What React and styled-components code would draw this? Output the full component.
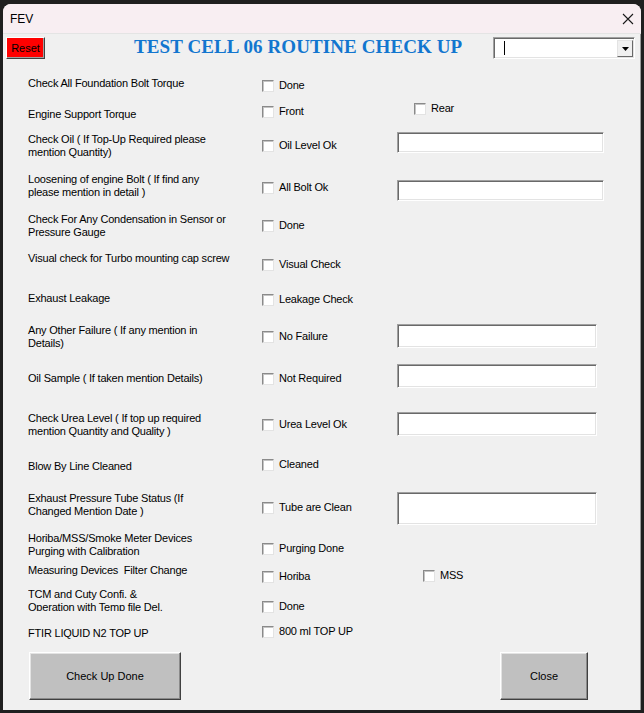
import React from "react";
import styled, { createGlobalStyle } from "styled-components";

const GlobalStyle = createGlobalStyle`
  html, body {
    margin: 0;
    padding: 0;
    background: #1f1f1f;
  }
  #root {
    width: 644px;
    height: 713px;
    overflow: hidden;
  }
`;

const Window = styled.div`
  width: 638px;
  height: 706px;
  margin: 4px 0 0 3px;
  border-radius: 8px 8px 0 0;
  overflow: hidden;
  background: #f0f0f0;
  display: flex;
  flex-direction: column;
  font-family: "Liberation Sans", Arial, sans-serif;
  font-size: 11px;
  letter-spacing: -0.2px;
  color: #000;
`;

const TitleBar = styled.div`
  height: 29px;
  flex: none;
  display: flex;
  align-items: center;
  justify-content: space-between;
  padding: 0 7px 0 7px;
  background: #f8eef2;
  border-bottom: 1px solid #e4e4e4;
  font-size: 12px;
  letter-spacing: 0;
`;

const Body = styled.div`
  flex: 1;
  display: flex;
  flex-direction: column;
  border-right: 1px solid #9a9a9a;
`;

const Header = styled.div`
  height: 33px;
  flex: none;
  display: flex;
  align-items: flex-start;
  padding: 3px 5px 0 3px;
`;

const ResetButton = styled.button`
  width: 39px;
  height: 22px;
  padding: 0;
  background: #ff0000;
  font: inherit;
  color: #000;
  border: 1px solid;
  border-color: #ffffff #404040 #404040 #ffffff;
  box-shadow: inset -1px -1px #a0a0a0;
`;

const Heading = styled.h1`
  margin: -1px 0 0 89px;
  font-family: "Liberation Serif", "Times New Roman", serif;
  font-weight: 700;
  font-size: 19px;
  line-height: 22px;
  letter-spacing: 0.1px;
  color: #1276cf;
  white-space: nowrap;
`;

const Combo = styled.div`
  margin-left: auto;
  width: 142px;
  height: 22px;
  box-sizing: border-box;
  display: flex;
  background: #fff;
  border: 1px solid;
  border-color: #a0a0a0 #ffffff #ffffff #a0a0a0;
  box-shadow: inset 1px 1px #696969, inset -1px -1px #e3e3e3;
  padding: 2px 1px 1px 2px;
`;

const Caret = styled.span`
  width: 1px;
  height: 14px;
  margin: 1px 0 0 8px;
  background: #000;
`;

const DropButton = styled.span`
  margin-left: auto;
  width: 16px;
  height: 17px;
  box-sizing: border-box;
  display: flex;
  align-items: center;
  justify-content: center;
  background: #f0f0f0;
  border: 1px solid;
  border-color: #e3e3e3 #696969 #696969 #e3e3e3;
`;

const Rows = styled.div`
  display: flex;
  flex-direction: column;
`;

const Row = styled.div`
  height: ${(p) => p.$h}px;
  display: grid;
  grid-template-columns: 234px 135px 1fr;
  padding-left: 25px;
  align-items: start;
`;

const Label = styled.div`
  margin-top: ${(p) => p.$top}px;
  line-height: 13px;
  white-space: pre;
  ${(p) => (p.$clip ? `height: ${p.$clip}px; overflow: hidden;` : "")}
`;

const Extra = styled.div`
  display: flex;
  align-items: flex-start;
`;

const CheckItem = styled.label`
  margin-top: ${(p) => p.$top + 1}px;
  margin-left: ${(p) => p.$left || 0}px;
  display: flex;
  align-items: center;
  gap: 5px;
  height: 13px;
  line-height: 13px;
  white-space: nowrap;
`;

const Box = styled.span`
  width: 12px;
  height: 12px;
  box-sizing: border-box;
  flex: none;
  background: #fff;
  border: 1px solid;
  border-color: #8a8a8a #e3e3e3 #e3e3e3 #8a8a8a;
  box-shadow: inset 1px 1px #c4c4c4;
`;

const Field = styled.div`
  margin-top: ${(p) => p.$top}px;
  width: ${(p) => p.$w}px;
  height: ${(p) => p.$h}px;
  box-sizing: border-box;
  background: #fff;
  border: 1px solid;
  border-color: #a0a0a0 #ffffff #ffffff #a0a0a0;
  box-shadow: inset 1px 1px #696969, inset -1px -1px #e3e3e3;
`;

const Footer = styled.div`
  flex: 1;
  display: flex;
  justify-content: space-between;
  align-items: flex-start;
  padding: 4px 52px 0 26px;
`;

const ActionButton = styled.button`
  width: ${(p) => p.$w}px;
  height: 48px;
  padding: 0;
  background: #c0c0c0;
  font: inherit;
  color: #000;
  border: 1px solid;
  border-color: #ffffff #404040 #404040 #ffffff;
  box-shadow: inset -1px -1px #8a8a8a, inset 1px 1px #e3e3e3;
`;

const Check = ({ text, top, left }) => (
  <CheckItem $top={top} $left={left}>
    <Box />
    {text}
  </CheckItem>
);

const rows = [
  { h: 30, label: "Check All Foundation Bolt Torque", lt: 7, check: ["Done", 8] },
  { h: 28, label: "Engine Support Torque", lt: 8, check: ["Front", 4], extraCheck: ["Rear", 1, 17] },
  { h: 42, label: "Check Oil ( If Top-Up Required please\nmention Quantity)", lt: 5, check: ["Oil Level Ok", 10], field: [4, 207, 21] },
  { h: 40, label: "Loosening of engine Bolt ( If find any\nplease mention in detail )", lt: 3, check: ["All Bolt Ok", 10], field: [10, 207, 21] },
  { h: 38, label: "Check For Any Condensation in Sensor or\nPressure Gauge", lt: 3, check: ["Done", 8] },
  { h: 40, label: "Visual check for Turbo mounting cap screw", lt: 4, check: ["Visual Check", 9] },
  { h: 30, label: "Exhaust Leakage", lt: 4, check: ["Leakage Check", 4] },
  { h: 38, label: "Any Other Failure ( If any mention in\nDetails)", lt: 6, check: ["No Failure", 11], field: [6, 200, 24] },
  { h: 44, label: "Oil Sample ( If taken mention Details)", lt: 16, check: ["Not Required", 15], field: [8, 200, 24] },
  { h: 50, label: "Check Urea Level ( If top up required\nmention Quantity and Quality )", lt: 12, check: ["Urea Level Ok", 17], field: [12, 200, 24] },
  { h: 32, label: "Blow By Line Cleaned", lt: 10, check: ["Cleaned", 7] },
  { h: 48, label: "Exhaust Pressure Tube Status (If\nChanged Mention Date )", lt: 10, check: ["Tube are Clean", 18], field: [10, 200, 33] },
  { h: 32, label: "Horiba/MSS/Smoke Meter Devices\nPurging with Calibration", lt: 2, check: ["Purging Done", 11] },
  { h: 24, label: "Measuring Devices  Filter Change", lt: 2, check: ["Horiba", 7], extraCheck: ["MSS", 6, 26] },
  { h: 34, label: "TCM and Cuty Confi. &\nOperation with Temp file Del.", lt: 2, clip: 23, check: ["Done", 13] },
  { h: 28, label: "FTIR LIQUID N2 TOP UP", lt: 7, check: ["800 ml TOP UP", 4] },
];

const App = () => {
  return (
    <>
      <GlobalStyle />
      <Window>
        <TitleBar>
          <span>FEV</span>
          <svg width="12" height="12" viewBox="0 0 12 12">
            <path d="M1 1 L11 11 M11 1 L1 11" stroke="#1a1a1a" strokeWidth="1.1" fill="none" />
          </svg>
        </TitleBar>
        <Body>
          <Header>
            <ResetButton>Reset</ResetButton>
            <Heading>TEST CELL 06 ROUTINE CHECK UP</Heading>
            <Combo>
              <Caret />
              <DropButton>
                <svg width="7" height="4" viewBox="0 0 7 4">
                  <path d="M0 0 H7 L3.5 4 Z" fill="#000" />
                </svg>
              </DropButton>
            </Combo>
          </Header>
          <Rows>
            {rows.map((row, idx) => (
              <Row key={idx} $h={row.h}>
                <Label $top={row.lt} $clip={row.clip}>
                  {row.label}
                </Label>
                <Check text={row.check[0]} top={row.check[1]} />
                <Extra>
                  {row.field && <Field $top={row.field[0]} $w={row.field[1]} $h={row.field[2]} />}
                  {row.extraCheck && (
                    <Check text={row.extraCheck[0]} top={row.extraCheck[1]} left={row.extraCheck[2]} />
                  )}
                </Extra>
              </Row>
            ))}
          </Rows>
          <Footer>
            <ActionButton $w={152}>Check Up Done</ActionButton>
            <ActionButton $w={88}>Close</ActionButton>
          </Footer>
        </Body>
      </Window>
    </>
  );
};

export default App;
